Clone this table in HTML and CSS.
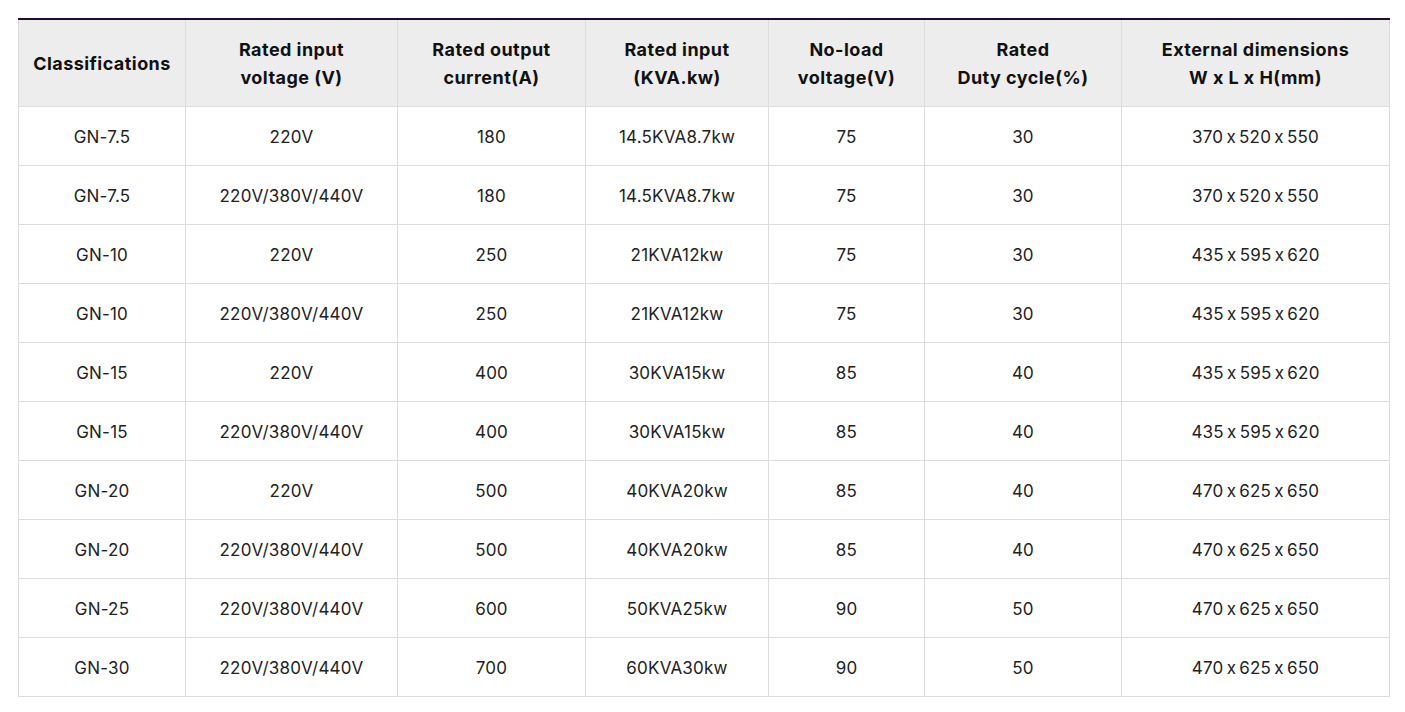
FILE: index.html
```html
<!DOCTYPE html>
<html lang="en">
<head>
<meta charset="utf-8">
<title>Specifications</title>
<link rel="stylesheet" href="styles.css">
</head>
<body>
<div class="wrap">
<table class="spec">
<colgroup>
<col class="c1"><col class="c2"><col class="c3"><col class="c4"><col class="c5"><col class="c6"><col class="c7">
</colgroup>
<thead>
<tr>
<th>Classifications</th>
<th>Rated input<br>voltage (V)</th>
<th>Rated output<br>current(A)</th>
<th>Rated input<br>(KVA.kw)</th>
<th>No-load<br>voltage(V)</th>
<th>Rated<br>Duty cycle(%)</th>
<th>External dimensions<br>W x L x H(mm)</th>
</tr>
</thead>
<tbody>
<tr><td>GN-7.5</td><td>220V</td><td>180</td><td>14.5KVA8.7kw</td><td>75</td><td>30</td><td>370 x 520 x 550</td></tr>
<tr><td>GN-7.5</td><td>220V/380V/440V</td><td>180</td><td>14.5KVA8.7kw</td><td>75</td><td>30</td><td>370 x 520 x 550</td></tr>
<tr><td>GN-10</td><td>220V</td><td>250</td><td>21KVA12kw</td><td>75</td><td>30</td><td>435 x 595 x 620</td></tr>
<tr><td>GN-10</td><td>220V/380V/440V</td><td>250</td><td>21KVA12kw</td><td>75</td><td>30</td><td>435 x 595 x 620</td></tr>
<tr><td>GN-15</td><td>220V</td><td>400</td><td>30KVA15kw</td><td>85</td><td>40</td><td>435 x 595 x 620</td></tr>
<tr><td>GN-15</td><td>220V/380V/440V</td><td>400</td><td>30KVA15kw</td><td>85</td><td>40</td><td>435 x 595 x 620</td></tr>
<tr><td>GN-20</td><td>220V</td><td>500</td><td>40KVA20kw</td><td>85</td><td>40</td><td>470 x 625 x 650</td></tr>
<tr><td>GN-20</td><td>220V/380V/440V</td><td>500</td><td>40KVA20kw</td><td>85</td><td>40</td><td>470 x 625 x 650</td></tr>
<tr><td>GN-25</td><td>220V/380V/440V</td><td>600</td><td>50KVA25kw</td><td>90</td><td>50</td><td>470 x 625 x 650</td></tr>
<tr><td>GN-30</td><td>220V/380V/440V</td><td>700</td><td>60KVA30kw</td><td>90</td><td>50</td><td>470 x 625 x 650</td></tr>
</tbody>
</table>
</div>
</body>
</html>
```
FILE: styles.css
```css
html, body {
  margin: 0;
  padding: 0;
  background: #ffffff;
}
.wrap {
  padding: 18px 16px 0 18px;
}
.spec {
  width: 1371px;
  border-collapse: collapse;
  border-top: 2px solid #1f0b33;
  font-family: Inter, Roboto, "Noto Sans", Arial, sans-serif;
  font-feature-settings: "calt" 0;
  color: #1a1a1a;
  table-layout: fixed;
}
.c1 { width: 167px; }
.c2 { width: 212px; }
.c3 { width: 188px; }
.c4 { width: 183px; }
.c5 { width: 156px; }
.c6 { width: 197px; }
.c7 { width: 268px; }
.spec th,
.spec td {
  border: 1px solid #dddddd;
  text-align: center;
  padding: 0;
}
.spec thead th {
  border-top: 2px solid #1f0b33;
  background: #ededed;
  height: 84px;
  padding-top: 2px;
  font-size: 18px;
  font-weight: 700;
  letter-spacing: 0.45px;
  line-height: 28px;
  color: #111111;
}
.spec td {
  height: 56px;
  padding-top: 2px;
  font-size: 17px;
  font-weight: 400;
  letter-spacing: 0.2px;
  word-spacing: -1.8px;
  color: #222222;
}
```
